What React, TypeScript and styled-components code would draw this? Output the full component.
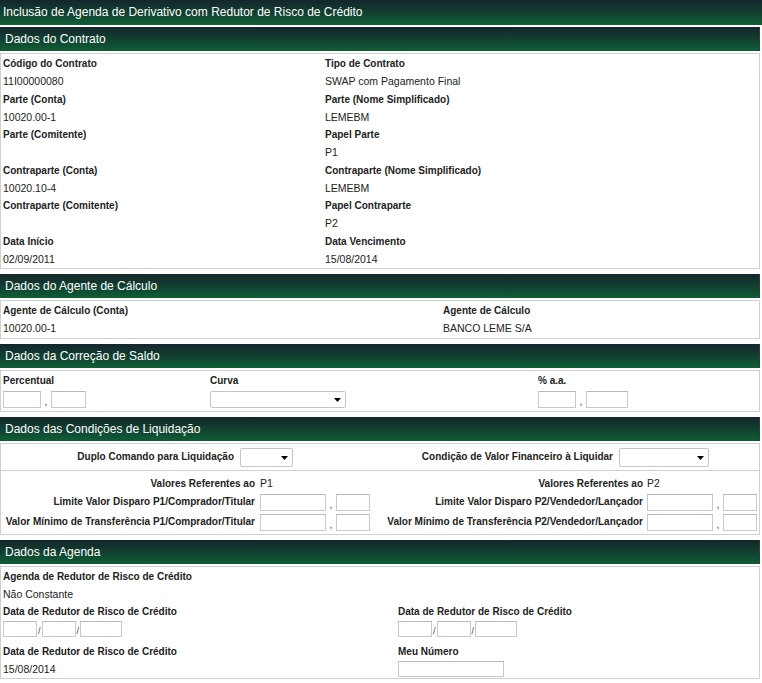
import { FC, ReactNode } from 'react'
import styled, { createGlobalStyle } from 'styled-components'

const GlobalStyle = createGlobalStyle`
  * {
    box-sizing: border-box;
  }
  body {
    margin: 0;
    background: #fff;
    color: #222;
    font-family: 'Liberation Sans', Arial, sans-serif;
  }
`

const contractFields: [string, string][] = [
  ['Código do Contrato', '11I00000080'],
  ['Tipo de Contrato', 'SWAP com Pagamento Final'],
  ['Parte (Conta)', '10020.00-1'],
  ['Parte (Nome Simplificado)', 'LEMEBM'],
  ['Parte (Comitente)', ''],
  ['Papel Parte', 'P1'],
  ['Contraparte (Conta)', '10020.10-4'],
  ['Contraparte (Nome Simplificado)', 'LEMEBM'],
  ['Contraparte (Comitente)', ''],
  ['Papel Contraparte', 'P2'],
  ['Data Início', '02/09/2011'],
  ['Data Vencimento', '15/08/2014'],
]

const Arrow: FC = () => (
  <svg width="7" height="4" viewBox="0 0 7 4">
    <path d="M0 0 L7 0 L3.5 4 Z" fill="#000" />
  </svg>
)

const Section: FC<{ title: string; children: ReactNode }> = ({ title, children }) => (
  <SectionBox>
    <SectionHeader>{title}</SectionHeader>
    <Panel>{children}</Panel>
  </SectionBox>
)

const DateInputs: FC = () => (
  <InputRow $h={21.5}>
    <TextInput $w={34} $h={16} />
    <Slash>/</Slash>
    <TextInput $w={34} $h={16} />
    <Slash>/</Slash>
    <TextInput $w={42} $h={16} />
  </InputRow>
)

const SplitInput: FC<{ first: number; second: number; gap: number; h: number }> = ({ first, second, gap, h }) => (
  <>
    <TextInput $w={first} $h={h} />
    <Comma $w={gap} $h={h}>,</Comma>
    <TextInput $w={second} $h={h} />
  </>
)

const App: FC = () => {
  return (
    <Page>
      <GlobalStyle />
      <TitleBar>Inclusão de Agenda de Derivativo com Redutor de Risco de Crédito</TitleBar>

      <Section title="Dados do Contrato">
        <FieldGrid $cols="322px 1fr">
          {contractFields.map(([label, value]) => (
            <div key={label}>
              <Label>{label}</Label>
              <Value>{value}</Value>
            </div>
          ))}
        </FieldGrid>
      </Section>

      <Section title="Dados do Agente de Cálculo">
        <FieldGrid $cols="440px 1fr">
          <div>
            <Label>Agente de Cálculo (Conta)</Label>
            <Value>10020.00-1</Value>
          </div>
          <div>
            <Label>Agente de Cálculo</Label>
            <Value>BANCO LEME S/A</Value>
          </div>
        </FieldGrid>
      </Section>

      <Section title="Dados da Correção de Saldo">
        <FieldGrid $cols="207px 328px 1fr">
          <div>
            <Label>Percentual</Label>
            <InputRow $h={21}>
              <SplitInput first={38} second={35} gap={10} h={17} />
            </InputRow>
          </div>
          <div>
            <Label>Curva</Label>
            <InputRow $h={21}>
              <SelectBox $w={136} $h={17}>
                <Arrow />
              </SelectBox>
            </InputRow>
          </div>
          <div>
            <Label>% a.a.</Label>
            <InputRow $h={21}>
              <SplitInput first={38} second={42} gap={10} h={17} />
            </InputRow>
          </div>
        </FieldGrid>
      </Section>

      <Section title="Dados das Condições de Liquidação">
        <CommandRow>
          <RowLabel>Duplo Comando para Liquidação</RowLabel>
          <RowValue>
            <SelectBox $w={53} $h={19}>
              <Arrow />
            </SelectBox>
          </RowValue>
          <RowLabel>Condição de Valor Financeiro à Liquidar</RowLabel>
          <RowValue>
            <SelectBox $w={90} $h={19}>
              <Arrow />
            </SelectBox>
          </RowValue>
        </CommandRow>
        <LimitGrid>
          <RowLabel $h={18}>Valores Referentes ao</RowLabel>
          <RowValue $h={18} $pad={2}>
            <Value>P1</Value>
          </RowValue>
          <RowLabel $h={18}>Valores Referentes ao</RowLabel>
          <RowValue $h={18} $pad={1}>
            <Value>P2</Value>
          </RowValue>

          <RowLabel $h={20.5}>Limite Valor Disparo P1/Comprador/Titular</RowLabel>
          <RowValue $h={20.5} $pad={2}>
            <SplitInput first={66} second={34} gap={10} h={17} />
          </RowValue>
          <RowLabel $h={20.5}>Limite Valor Disparo P2/Vendedor/Lançador</RowLabel>
          <RowValue $h={20.5} $pad={1}>
            <SplitInput first={66} second={34} gap={10} h={17} />
          </RowValue>

          <RowLabel $h={20.5}>Valor Mínimo de Transferência P1/Comprador/Titular</RowLabel>
          <RowValue $h={20.5} $pad={2}>
            <SplitInput first={66} second={34} gap={10} h={17} />
          </RowValue>
          <RowLabel $h={20.5}>Valor Mínimo de Transferência P2/Vendedor/Lançador</RowLabel>
          <RowValue $h={20.5} $pad={1}>
            <SplitInput first={66} second={34} gap={10} h={17} />
          </RowValue>
        </LimitGrid>
      </Section>

      <Section title="Dados da Agenda">
        <FieldGrid $cols="395px 1fr">
          <div>
            <Label>Agenda de Redutor de Risco de Crédito</Label>
            <Value>Não Constante</Value>
          </div>
          <div />
          <div>
            <Label>Data de Redutor de Risco de Crédito</Label>
            <DateInputs />
          </div>
          <div>
            <Label>Data de Redutor de Risco de Crédito</Label>
            <DateInputs />
          </div>
          <div>
            <Label>Data de Redutor de Risco de Crédito</Label>
            <Value>15/08/2014</Value>
          </div>
          <div>
            <Label>Meu Número</Label>
            <Value>
              <TextInput $w={106} $h={16} />
            </Value>
          </div>
        </FieldGrid>
      </Section>
    </Page>
  )
}

const Page = styled.div`
  width: 762px;
`

const TitleBar = styled.div`
  height: 25px;
  line-height: 25px;
  padding-left: 3px;
  margin-bottom: 2px;
  color: #fff;
  font-size: 12px;
  white-space: nowrap;
  background: linear-gradient(to bottom, #14262a 0%, #114231 55%, #0e5f36 100%);
`

const SectionBox = styled.div`
  width: 760px;
  margin-bottom: 5px;
`

const SectionHeader = styled.div`
  height: 24px;
  line-height: 24px;
  padding-left: 5px;
  margin-bottom: 2px;
  color: #fff;
  font-size: 12px;
  background: linear-gradient(to bottom, #14262a 0%, #114231 55%, #0e5f36 100%);
  border-right: 1px solid #2c3d38;
`

const Panel = styled.div`
  border: 1px solid #d0d0d0;
  padding-top: 1px;
`

const FieldGrid = styled.div<{ $cols: string }>`
  display: grid;
  grid-template-columns: ${(p) => p.$cols};
  padding-left: 2px;
`

const Label = styled.div`
  height: 18px;
  line-height: 18px;
  font-size: 10px;
  font-weight: bold;
  white-space: nowrap;
`

const Value = styled.div`
  height: 17.5px;
  line-height: 17.5px;
  font-size: 10.5px;
  white-space: nowrap;
  display: flex;
  align-items: center;
`

const InputRow = styled.div<{ $h: number }>`
  height: ${(p) => p.$h}px;
  display: flex;
  align-items: flex-start;
  padding-top: ${(p) => (p.$h === 21 ? 1 : 0)}px;
`

const TextInput = styled.input.attrs({ type: 'text' })<{ $w: number; $h: number }>`
  display: block;
  width: ${(p) => p.$w}px;
  height: ${(p) => p.$h}px;
  margin: 0;
  padding: 0;
  border: 1px solid #c9c9c9;
  border-top-color: #b9b9b9;
  background: #fff;
  outline: none;
`

const Comma = styled.span<{ $w: number; $h: number }>`
  width: ${(p) => p.$w}px;
  height: ${(p) => p.$h}px;
  line-height: ${(p) => p.$h + 4}px;
  text-align: center;
  font-size: 10px;
  color: #444;
`

const Slash = styled.span`
  width: 4.5px;
  height: 16px;
  line-height: 20px;
  text-align: center;
  font-size: 9px;
  color: #444;
`

const SelectBox = styled.div<{ $w: number; $h: number }>`
  width: ${(p) => p.$w}px;
  height: ${(p) => p.$h}px;
  display: flex;
  justify-content: flex-end;
  align-items: center;
  padding: 2px 4px 0 0;
  border: 1px solid #c6c6c6;
  border-radius: 2px;
  background: #fff;
`

const CommandRow = styled.div`
  display: grid;
  grid-template-columns: 236px 141px 238px 1fr;
  height: 26px;
  border-bottom: 1px solid #d0d0d0;
  align-items: center;
`

const LimitGrid = styled.div`
  display: grid;
  grid-template-columns: 257px 119px 269px 1fr;
  padding-top: 4px;
`

const RowLabel = styled.div<{ $h?: number }>`
  display: flex;
  justify-content: flex-end;
  align-items: ${(p) => (p.$h && p.$h > 20 ? 'flex-start' : 'center')};
  height: ${(p) => (p.$h ? `${p.$h}px` : 'auto')};
  line-height: 18px;
  padding-right: 3px;
  font-size: 10px;
  font-weight: bold;
  white-space: nowrap;
`

const RowValue = styled.div<{ $h?: number; $pad?: number }>`
  display: flex;
  align-items: ${(p) => (p.$h && p.$h > 20 ? 'flex-start' : 'center')};
  height: ${(p) => (p.$h ? `${p.$h}px` : 'auto')};
  padding-left: ${(p) => p.$pad ?? 3}px;
  padding-top: ${(p) => (p.$h && p.$h > 20 ? 1 : 0)}px;
`

export default App
